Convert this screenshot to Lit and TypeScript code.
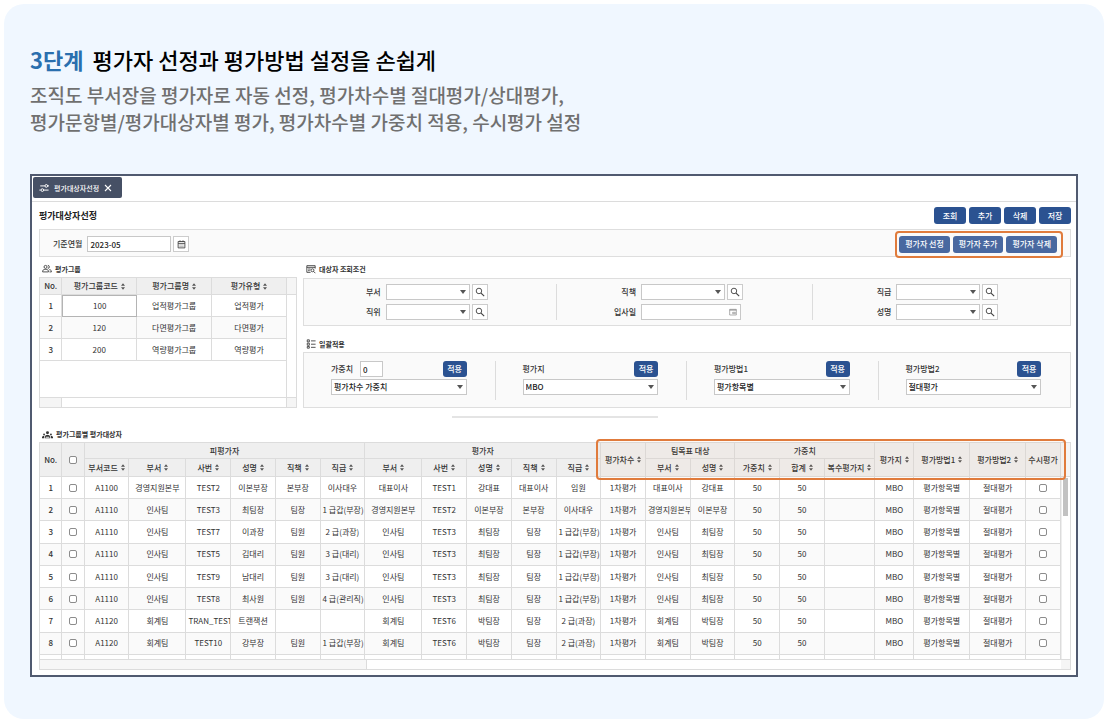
import { LitElement, css, html, svg, nothing } from "lit";
import { customElement } from "lit/decorators.js";

interface Column {
  label: string;
  weight: number;
}

const LEAD_COLUMNS = [20, 20];

const COLUMNS: Column[] = [
  { label: "부서코드", weight: 40 },
  { label: "부서", weight: 51 },
  { label: "사번", weight: 40 },
  { label: "성명", weight: 40 },
  { label: "직책", weight: 40 },
  { label: "직급", weight: 40 },
  { label: "부서", weight: 51 },
  { label: "사번", weight: 40 },
  { label: "성명", weight: 40 },
  { label: "직책", weight: 40 },
  { label: "직급", weight: 40 },
  { label: "평가차수", weight: 40 },
  { label: "부서", weight: 40 },
  { label: "성명", weight: 40 },
  { label: "가중치", weight: 40 },
  { label: "합계", weight: 40 },
  { label: "복수평가지", weight: 45 },
  { label: "평가지", weight: 35 },
  { label: "평가방법1", weight: 50 },
  { label: "평가방법2", weight: 50 },
];

const TAIL = ["MBO", "평가항목별", "절대평가"];

const ROWS: string[][] = [
  ["A1100", "경영지원본부", "TEST2", "이본부장", "본부장", "이사대우", "대표이사", "TEST1", "강대표", "대표이사", "임원", "1차평가", "대표이사", "강대표", "50", "50", "", ...TAIL],
  ["A1110", "인사팀", "TEST3", "최팀장", "팀장", "1 급갑(부장)", "경영지원본부", "TEST2", "이본부장", "본부장", "이사대우", "1차평가", "경영지원본부", "이본부장", "50", "50", "", ...TAIL],
  ["A1110", "인사팀", "TEST7", "이과장", "팀원", "2 급(과장)", "인사팀", "TEST3", "최팀장", "팀장", "1 급갑(부장)", "1차평가", "인사팀", "최팀장", "50", "50", "", ...TAIL],
  ["A1110", "인사팀", "TEST5", "김대리", "팀원", "3 급(대리)", "인사팀", "TEST3", "최팀장", "팀장", "1 급갑(부장)", "1차평가", "인사팀", "최팀장", "50", "50", "", ...TAIL],
  ["A1110", "인사팀", "TEST9", "남대리", "팀원", "3 급(대리)", "인사팀", "TEST3", "최팀장", "팀장", "1 급갑(부장)", "1차평가", "인사팀", "최팀장", "50", "50", "", ...TAIL],
  ["A1110", "인사팀", "TEST8", "최사원", "팀원", "4 급(관리직)", "인사팀", "TEST3", "최팀장", "팀장", "1 급갑(부장)", "1차평가", "인사팀", "최팀장", "50", "50", "", ...TAIL],
  ["A1120", "회계팀", "TRAN_TEST", "트랜잭션", "", "", "회계팀", "TEST6", "박팀장", "팀장", "2 급(과장)", "1차평가", "회계팀", "박팀장", "50", "50", "", ...TAIL],
  ["A1120", "회계팀", "TEST10", "강부장", "팀원", "1 급갑(부장)", "회계팀", "TEST6", "박팀장", "팀장", "2 급(과장)", "1차평가", "회계팀", "박팀장", "50", "50", "", ...TAIL],
];

const GROUPS = [
  ["100", "업적평가그룹", "업적평가"],
  ["120", "다면평가그룹", "다면평가"],
  ["200", "역량평가그룹", "역량평가"],
];

const icon = (size: number, body: unknown, name = "") => html`
  <svg class="icon ${name}" width=${size} height=${size} viewBox="0 0 24 24" fill="none"
    stroke="currentColor" stroke-width="2" aria-hidden="true">${body}</svg>`;

const tuneIcon = svg`<g stroke-width="2.4"><path d="M3 7h11M12 17h11M1 17h3"/><circle cx="17.5" cy="7" r="3.2"/><circle cx="8" cy="17" r="3.2"/><path d="M20.500 7H24"/></g>`;
const closeIcon = svg`<path d="M3 3l18 18M21 3L3 21" stroke-width="3.2"/>`;
const calendarIcon = svg`<path d="M3 4h18v17H3zM3 9h18" stroke-width="2.4"/><path d="M8 1v4M16 1v4" stroke-width="2.400"/><path d="M6 13h12M6 17h12" stroke-width="1"/>`;
const dateIcon = svg`<path d="M2 4h20v17H2z"/><path d="M2 6h20" stroke-width="3"/><path d="M11 13h8v4h-8z"/>`;
const searchIcon = svg`<circle cx="9.5" cy="9.5" r="6.600" stroke-width="2.200"/><path d="M14.500 14.500l7.500 7.500" stroke-width="2.800"/>`;
const groupIcon = svg`<circle cx="8.5" cy="7" r="3.6"/><path d="M14 3.4a3.6 3.6 0 0 1 0 7.2"/><path d="M1.5 19v-2c0-3 4-4 7-4s7 1 7 4v2zM17.5 13.500c3 .6 5 1.700 5 3.500v2H18"/>`;
const findIcon = svg`<path d="M11 20H2V4h20v7M2 8h20M5 12h6M5 16h4"/><circle cx="15.5" cy="15" r="3.6"/><path d="M18 17.600l4.500 4.500"/>`;
const listIcon = svg`<path d="M3 2h5v5H3zM3 10h5v5H3zM3 18h5v4H3zM12 4.500h11M12 12.500h11M12 20h11"/>`;
const peopleIcon = svg`<g fill="currentColor" stroke="none"><circle cx="12" cy="8" r="3.2"/><circle cx="4.500" cy="12" r="2"/><circle cx="19.500" cy="12" r="2"/><path d="M6 20v-3c0-2.600 3-4 6-4s6 1.400 6 4v3zM0 20v-2c0-1.800 2-2.800 4.500-2.800V20zM24 20v-2c0-1.800-2-2.800-4.500-2.800V20z"/></g><path d="M8 18h8" stroke="#fff"/>`;

const sorter = html`<svg class="sorter" width="5" height="8" viewBox="0 0 5 8" aria-hidden="true">
  <path d="M2.5 0L5 3H0zM2.5 8L0 5h5z" fill="currentColor"/></svg>`;

@customElement("app-root")
export class AppRoot extends LitElement {
  static styles = css`
    :host {
      display: block;
      font-family: "Noto Sans CJK KR", "Noto Sans", sans-serif;
      color: #333;
      background: #fff;
    }
    * { box-sizing: border-box; }
    h1, h2, h3, p { margin: 0; }
    button, input, select { font: inherit; color: inherit; margin: 0; }
    .icon, .sorter { display: block; flex: none; }

    .card {
      margin: 4px;
      padding: 39px 26px 42px;
      border-radius: 20px;
      background: #f0f7ff;
    }
    .headline { font-size: 22px; line-height: 32px; font-weight: 500; color: #000; }
    .step { margin-right: 9px; font-weight: 700; color: #2a6fae; }
    .lead { margin-top: 6px; font-size: 19px; line-height: 27px; font-weight: 500; color: #707070; }

    .window {
      margin-top: 39px;
      border: 2px solid #505a70;
      background: #fff;
      font-size: 8px;
      line-height: 12px;
    }
    .tabs { display: flex; padding: 1px 1px 3px; border-bottom: 1px solid #dcdcdc; }
    .tab {
      display: flex;
      align-items: center;
      gap: 5px;
      height: 21px;
      padding: 0 10px 0 6px;
      border: 0;
      border-radius: 2px;
      background: #465065;
      color: #fff;
      font-size: 7px;
      font-weight: 500;
    }
    .content { padding: 5px 5px 5px 7px; }
    .titlebar { display: flex; align-items: center; justify-content: space-between; }
    .title { font-size: 9px; line-height: 17px; font-weight: 700; color: #222; }
    .actions { display: flex; gap: 3px; }
    .btn {
      height: 17px;
      min-width: 32px;
      padding: 0 8px;
      border: 0;
      border-radius: 3px;
      background: #2b5291;
      color: #fff;
      font-weight: 500;
      line-height: 12px;
      white-space: nowrap;
    }
    .btn.soft { padding: 0 6px; background: #4968a0; }
    .btn.small { height: 16px; min-width: 24px; padding: 0 4px; }

    .panel { border: 1px solid #dedede; background: #fafafa; }
    .filter { display: flex; align-items: center; justify-content: space-between; height: 28px; margin-top: 5px; padding: 2px 5px 0 13px; }
    .field { display: flex; align-items: center; }
    .label { font-weight: 500; white-space: nowrap; color: #333; }
    .field .label { margin-right: 5px; }
    .box {
      height: 16px;
      width: 100%;
      padding: 0 2px;
      border: 1px solid #c8c8c8;
      border-radius: 0;
      background: #fff;
      color: #222;
      font-weight: 500;
      line-height: 12px;
      outline: 0;
      appearance: none;
    }
    .month { width: 84px; }
    .square {
      display: grid;
      place-items: center;
      width: 16px;
      height: 16px;
      margin-left: 2px;
      padding: 0;
      border: 1px solid #ccc;
      background: #fff;
      color: #444;
    }
    .highlight {
      border: 2px solid #e07b3c;
      border-radius: 4px;
    }
    .highlight.actions { padding: 3px 4px 3px 2px; margin-right: 2px; }

    .upper { display: grid; grid-template-columns: minmax(0, 258fr) minmax(0, 768fr); gap: 6px; margin-top: 4px; }
    .stack { display: flex; flex-direction: column; min-width: 0; }
    .section {
      display: flex;
      align-items: center;
      gap: 3px;
      height: 16px;
      padding-left: 3px;
      font-size: 7px;
      font-weight: 700;
      color: #333;
    }
    .section.spaced { margin-top: 10px; }

    table { width: 100%; table-layout: fixed; border-collapse: separate; border-spacing: 0; }
    th, td {
      padding: 0 2px;
      border-right: 1px solid #dcdcdc;
      border-bottom: 1px solid #dcdcdc;
      overflow: hidden;
      text-align: center;
      white-space: nowrap;
      font-weight: 400;
    }
    thead th { background: #efefef; font-weight: 500; padding: 0 1px; }
    tbody th { font-weight: 500; }
    tbody tr:nth-child(even) > * { background: #fafafa; }
    .sortable { display: inline-flex; align-items: center; gap: 3px; vertical-align: middle; }
    .sorter { width: 4px; height: 7px; color: #555; }

    .groups { display: flex; flex: 1; border: 1px solid #dcdcdc; }
    .groups-main { display: flex; flex-direction: column; flex: 1; min-width: 0; }
    .groups-main thead tr { height: 17px; }
    .groups-main tbody tr { height: 22px; }
    .groups td.picked { border: 1px solid #b4b4b4; }
    .gutter { width: 9px; display: flex; flex-direction: column; }
    .gutter-head { background: #f5f5f5; border-bottom: 1px solid #dcdcdc; }
    .groups .gutter-head { height: 17px; }
    .gutter-body { flex: 1; }
    .gutter-foot { height: 10px; background: #f5f5f5; border-top: 1px solid #dcdcdc; }
    .groups .space { flex: 1; border-right: 1px solid #dcdcdc; }
    .groups .scroll { height: 10px; border-top: 1px solid #dcdcdc; border-right: 1px solid #dcdcdc; }
    .groups .scroll-left { width: 22px; height: 9px; background: #f5f5f5; border-right: 1px solid #dcdcdc; }

    .search { display: grid; grid-template-columns: repeat(3, minmax(0, 1fr)); margin-top: 1px; padding: 5px 0; }
    .search-col { display: flex; flex-direction: column; gap: 4px; }
    .search-col + .search-col { box-shadow: -2px 0 #fafafa, -3px 0 #dcdcdc; }
    .search .field { display: grid; grid-template-columns: 32% 84px 18px; }
    .search .field .label { text-align: right; }
    .control { position: relative; display: block; }
    .control.wide { width: 100px; }
    .caret { position: absolute; right: 4px; top: 6px; pointer-events: none; color: #555; display: block; }
    .date { position: absolute; right: 4px; top: 4px; pointer-events: none; color: #888; }

    .bulk { display: grid; grid-template-columns: repeat(4, minmax(0, 1fr)); padding: 8px 0 7px; }
    .bulk-item { display: flex; flex-direction: column; gap: 2px; padding: 0 29px 5px 27px; }
    .bulk-item + .bulk-item { box-shadow: -1px 0 #dcdcdc; }
    .bulk-head { display: flex; align-items: center; justify-content: space-between; height: 16px; }
    .bulk-head .label { margin-right: 7px; }
    .weight { width: 23px; }

    .handle { width: 20%; height: 2px; margin: 8px auto; background: #e4e4e4; }

    .grid { position: relative; display: flex; border: 1px solid #dcdcdc; }
    .grid-main { flex: 1; min-width: 0; }
    .grid .band { height: 16px; }
    .grid .heads { height: 18px; }
    .grid table { height: 216px; }
    .grid tbody tr { height: 22px; }
    .grid tbody tr.next { height: 4px; line-height: 0; }
    .grid tbody tr.next > * { border-bottom: 0; }
    .grid .scroll { display: flex; height: 10px; border-top: 1px solid #dcdcdc; }
    .grid .scroll-left { width: 32%; background: #f7f7f7; border-right: 1px solid #dcdcdc; }
    .grid .gutter-head { height: 34px; }
    .grid .gutter-body { border-left: 1px solid #eee; }
    .thumb { width: 5px; height: 38px; margin: 1px 0 0 1px; background: #c2c2c2; }
    .mark {
      position: absolute;
      left: 54%;
      right: 4px;
      top: -4px;
      height: 41px;
      background: rgba(224, 123, 60, 0.04);
      pointer-events: none;
    }
    .check {
      display: block;
      width: 8px;
      height: 8px;
      margin: 0 auto;
      border: 1px solid #8c8c8c;
      border-radius: 2px;
      background: #fff;
      appearance: none;
    }
  `;

  private caret() {
    return html`<svg class="caret" width="6" height="4" viewBox="0 0 6 4" aria-hidden="true"><path d="M0 0h6L3 4z" fill="currentColor"/></svg>`;
  }

  private sortable(label: string) {
    return html`<span class="sortable">${label}${sorter}</span>`;
  }

  private lookup(id: string, label: string) {
    return html`<div class="field">
      <label class="label" for=${id}>${label}</label>
      <span class="control"><select class="box" id=${id}><option></option></select>${this.caret()}</span>
      <button class="square" aria-label="${label} 검색">${icon(10, searchIcon)}</button>
    </div>`;
  }

  private bulk(id: string, label: string, value: string, weight = false) {
    return html`<div class="bulk-item">
      <div class="bulk-head">
        ${weight
          ? html`<span class="field"><label class="label" for="weight">${label}</label><input class="box weight" id="weight" value="0" /></span>`
          : html`<label class="label" for=${id}>${label}</label>`}
        <button class="btn small">적용</button>
      </div>
      <span class="control">
        <select class="box" id=${id} aria-label=${value}><option>${value}</option></select>${this.caret()}
      </span>
    </div>`;
  }

  private renderGroups() {
    return html`<div class="groups">
      <div class="groups-main">
        <table aria-label="평가그룹">
          <colgroup><col width="20" /><col width="67" /><col width="67" /><col width="67" /></colgroup>
          <thead>
            <tr><th>No.</th><th>${this.sortable("평가그룹코드")}</th><th>${this.sortable("평가그룹명")}</th><th>${this.sortable("평가유형")}</th></tr>
          </thead>
          <tbody>
            ${GROUPS.map((g, i) => html`<tr><th>${i + 1}</th>${g.map((v, j) => html`<td class=${i === 0 && j === 0 ? "picked" : nothing}>${v}</td>`)}</tr>`)}
          </tbody>
        </table>
        <div class="space"></div>
        <div class="scroll"><div class="scroll-left"></div></div>
      </div>
      <div class="gutter"><div class="gutter-head"></div><div class="gutter-body"></div><div class="gutter-foot"></div></div>
    </div>`;
  }

  private renderGrid() {
    const pick = (from: number, to: number) => COLUMNS.slice(from, to).map((c) => html`<th>${this.sortable(c.label)}</th>`);
    const tall = (i: number) => html`<th rowspan="2">${this.sortable(COLUMNS[i].label)}</th>`;
    return html`<div class="grid">
      <div class="grid-main">
        <table aria-label="평가그룹별 평가대상자">
          <colgroup>
            ${LEAD_COLUMNS.map((w) => html`<col width=${w} />`)}
            ${COLUMNS.map((c) => html`<col width=${c.weight} />`)}
            <col width="31" />
          </colgroup>
          <thead>
            <tr class="band">
              <th rowspan="2">No.</th>
              <th rowspan="2"><input class="check" type="checkbox" aria-label="전체 선택" /></th>
              <th colspan="6">피평가자</th>
              <th colspan="5">평가자</th>
              ${tall(11)}
              <th colspan="2">팀목표 대상</th>
              <th colspan="3">가중치</th>
              ${tall(17)}${tall(18)}${tall(19)}
              <th rowspan="2">수시평가</th>
            </tr>
            <tr class="heads">${pick(0, 11)}${pick(12, 17)}</tr>
          </thead>
          <tbody>
            ${ROWS.map((r, i) => html`<tr>
              <th>${i + 1}</th>
              <td><input class="check" type="checkbox" aria-label="${i + 1}행 선택" /></td>
              ${r.map((v) => html`<td>${v}</td>`)}
              <td><input class="check" type="checkbox" aria-label="${i + 1}행 수시평가" /></td>
            </tr>`)}
            <tr class="next">${Array.from({ length: COLUMNS.length + 3 }, () => html`<td></td>`)}</tr>
          </tbody>
        </table>
        <div class="scroll"><div class="scroll-left"></div></div>
      </div>
      <div class="gutter">
        <div class="gutter-head"></div>
        <div class="gutter-body"><div class="thumb"></div></div>
        <div class="gutter-foot"></div>
      </div>
      <div class="mark highlight"></div>
    </div>`;
  }

  render() {
    return html`<main class="card">
      <h1 class="headline"><span class="step">3단계</span>평가자 선정과 평가방법 설정을 손쉽게</h1>
      <p class="lead">조직도 부서장을 평가자로 자동 선정, 평가차수별 절대평가/상대평가,<br />평가문항별/평가대상자별 평가, 평가차수별 가중치 적용, 수시평가 설정</p>
      <div class="window">
        <div class="tabs">
          <button class="tab">${icon(10, tuneIcon)}평가대상자선정${icon(8, closeIcon)}</button>
        </div>
        <div class="content">
          <div class="titlebar">
            <h2 class="title">평가대상자선정</h2>
            <div class="actions">${["조회", "추가", "삭제", "저장"].map((t) => html`<button class="btn">${t}</button>`)}</div>
          </div>
          <div class="panel filter">
            <div class="field">
              <label class="label" for="month">기준연월</label>
              <input class="box month" id="month" value="2023-05" />
              <button class="square" aria-label="달력">${icon(9, calendarIcon)}</button>
            </div>
            <div class="actions highlight">
              ${["평가자 선정", "평가자 추가", "평가자 삭제"].map((t) => html`<button class="btn soft">${t}</button>`)}
            </div>
          </div>
          <div class="upper">
            <div class="stack">
              <h3 class="section">${icon(10, groupIcon)}평가그룹</h3>
              ${this.renderGroups()}
            </div>
            <div class="stack">
              <h3 class="section">${icon(10, findIcon)}대상자 조회조건</h3>
              <div class="panel search">
                <div class="search-col">${this.lookup("dept", "부서")}${this.lookup("rank", "직위")}</div>
                <div class="search-col">
                  ${this.lookup("duty", "직책")}
                  <div class="field">
                    <label class="label" for="joined">입사일</label>
                    <span class="control wide"><input class="box" id="joined" />${icon(8, dateIcon, "date")}</span>
                  </div>
                </div>
                <div class="search-col">${this.lookup("grade", "직급")}${this.lookup("name", "성명")}</div>
              </div>
              <h3 class="section spaced">${icon(10, listIcon)}일괄적용</h3>
              <div class="panel bulk">
                ${this.bulk("b1", "가중치", "평가차수 가중치", true)}
                ${this.bulk("b2", "평가지", "MBO")}
                ${this.bulk("b3", "평가방법1", "평가항목별")}
                ${this.bulk("b4", "평가방법2", "절대평가")}
              </div>
            </div>
          </div>
          <div class="handle"></div>
          <h3 class="section">${icon(11, peopleIcon)}평가그룹별 평가대상자</h3>
          ${this.renderGrid()}
        </div>
      </div>
    </main>`;
  }
}
